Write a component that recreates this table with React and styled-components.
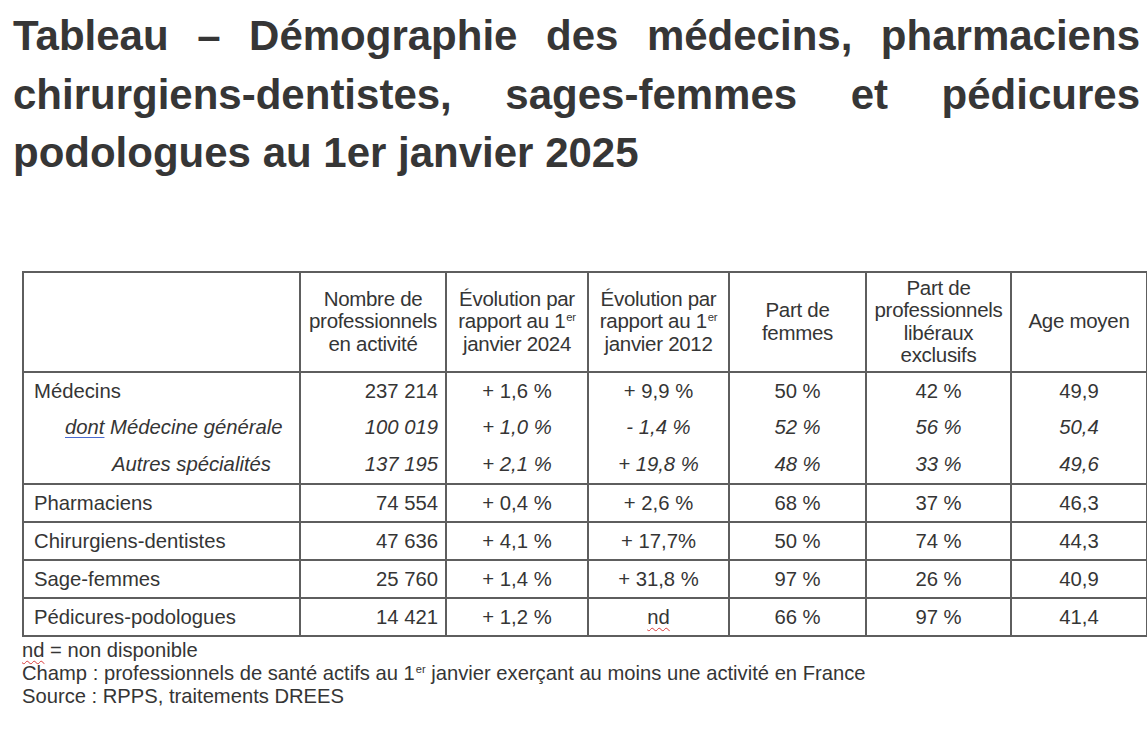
import React from "react";
import styled, { createGlobalStyle } from "styled-components";

const Global = createGlobalStyle`
  html, body { margin: 0; padding: 0; background: #ffffff; }
  body { font-family: "Liberation Sans", Arial, sans-serif; color: #333333; }
`;

const Page = styled.div`
  width: 1147px;
  height: 750px;
  overflow: hidden;
  box-sizing: border-box;
  padding: 7px 0 0 0;
`;

const Title = styled.h1`
  margin: 0 7px 0 13px;
  font-family: "Liberation Sans", Arial, sans-serif;
  font-weight: 700;
  font-size: 42px;
  line-height: 58.5px;
  color: #363636;
  text-align: justify;
`;

const Table = styled.table`
  margin: 88px 0 0 22px;
  width: 1124px;
  border-collapse: collapse;
  table-layout: fixed;
  border: 2px solid #5e5e5e;
  font-size: 20.3px;
  color: #353535;
`;

const HeadCell = styled.th`
  font-weight: 400;
  font-size: 20.5px;
  text-align: center;
  vertical-align: middle;
  height: 98px;
  padding: 0 2px;
  line-height: 22.5px;
  border: 2px solid #5e5e5e;
  letter-spacing: -0.3px;
`;

const Row = styled.tr`
  border-top: ${(p) => (p.$sep ? "2px solid #5e5e5e" : "none")};
`;

const Cell = styled.td`
  height: ${(p) => (p.$sub ? "37px" : "36px")};
  padding: ${(p) => (p.$first ? `0 8px 0 ${p.$indent}px` : p.$align === "right" ? "0 7px 0 4px" : "0 4px")};
  text-align: ${(p) => p.$align || "center"};
  font-style: ${(p) => (p.$italic ? "italic" : "normal")};
  vertical-align: middle;
  line-height: 22px;
  border-left: 2px solid #5e5e5e;
  border-right: 2px solid #5e5e5e;
  white-space: nowrap;
`;

const Sup = styled.span`
  display: inline-block;
  font-size: 0.55em;
  line-height: 1;
  vertical-align: top;
  margin: 2px 0 0 1px;
`;

const Grammar = styled.span`
  text-decoration: underline;
  text-decoration-color: #4a6ad0;
  text-decoration-thickness: 1px;
  text-underline-offset: 3px;
`;

const Spell = styled.span`
  text-decoration: underline wavy #d83a3a;
  text-decoration-thickness: 1px;
  text-underline-offset: 3px;
`;

const Notes = styled.div`
  margin: 2px 0 0 22px;
  font-size: 20.2px;
  line-height: 23px;
  color: #353535;
`;

const rows = [
  { label: "Médecins", indent: 10, sep: true, vals: ["237 214", "+ 1,6 %", "+ 9,9 %", "50 %", "42 %", "49,9"] },
  { label: <><Grammar>dont</Grammar> Médecine générale</>, indent: 41, sub: true, italic: true, vals: ["100 019", "+ 1,0 %", "- 1,4 %", "52 %", "56 %", "50,4"] },
  { label: "Autres spécialités", indent: 88, sub: true, italic: true, vals: ["137 195", "+ 2,1 %", "+ 19,8 %", "48 %", "33 %", "49,6"] },
  { label: "Pharmaciens", indent: 10, sep: true, vals: ["74 554", "+ 0,4 %", "+ 2,6 %", "68 %", "37 %", "46,3"] },
  { label: "Chirurgiens-dentistes", indent: 10, sep: true, vals: ["47 636", "+ 4,1 %", "+ 17,7%", "50 %", "74 %", "44,3"] },
  { label: "Sage-femmes", indent: 10, sep: true, vals: ["25 760", "+ 1,4 %", "+ 31,8 %", "97 %", "26 %", "40,9"] },
  { label: "Pédicures-podologues", indent: 10, sep: true, vals: ["14 421", "+ 1,2 %", <Spell>nd</Spell>, "66 %", "97 %", "41,4"] },
];

const widths = [277, 146, 142, 141, 137, 145, 136];

export default function App() {
  return (
    <Page>
      <Global />
      <Title>
        Tableau – Démographie des médecins, pharmaciens chirurgiens-dentistes, sages-femmes et pédicures podologues au 1er janvier 2025
      </Title>
      <Table>
        <colgroup>
          {widths.map((w, i) => (
            <col key={i} style={{ width: w }} />
          ))}
        </colgroup>
        <thead>
          <tr>
            <HeadCell />
            <HeadCell>Nombre de professionnels en activité</HeadCell>
            <HeadCell>Évolution par rapport au 1<Sup>er</Sup> janvier 2024</HeadCell>
            <HeadCell>Évolution par rapport au 1<Sup>er</Sup> janvier 2012</HeadCell>
            <HeadCell>Part de<br />femmes</HeadCell>
            <HeadCell>Part de professionnels libéraux exclusifs</HeadCell>
            <HeadCell>Age moyen</HeadCell>
          </tr>
        </thead>
        <tbody>
          {rows.map((r, i) => (
            <Row key={i} $sep={r.sep}>
              <Cell $first $sub={r.sub} $indent={r.indent} $align="left" $italic={r.italic}>{r.label}</Cell>
              {r.vals.map((v, j) => (
                <Cell key={j} $sub={r.sub} $align={j === 0 ? "right" : "center"} $italic={r.italic}>{v}</Cell>
              ))}
            </Row>
          ))}
        </tbody>
      </Table>
      <Notes>
        <div><Spell>nd</Spell> = non disponible</div>
        <div>Champ : professionnels de santé actifs au 1<Sup>er</Sup> janvier exerçant au moins une activité en France</div>
        <div>Source : RPPS, traitements DREES</div>
      </Notes>
    </Page>
  );
}
